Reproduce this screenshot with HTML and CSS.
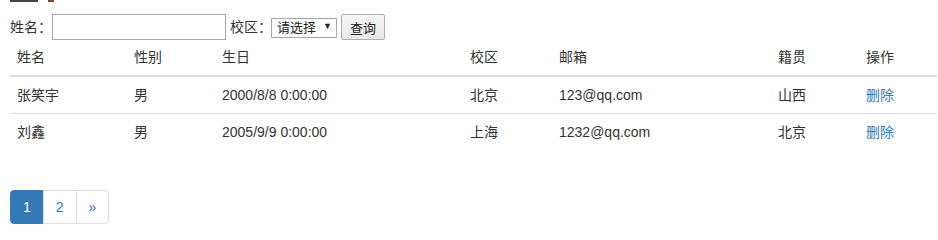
FILE: index.html
```html
<!DOCTYPE html>
<html lang="zh-CN">
<head>
<meta charset="utf-8">
<title>学生列表</title>
<link rel="stylesheet" href="styles.css">
</head>
<body>
<div class="page">
  <div class="top-cut"><span class="cut-a"></span><span class="cut-b"></span></div>
  <form class="search">
    <label class="lbl" for="name">姓名：</label>
    <input id="name" class="name-input" type="text">
    <label class="lbl gap" for="campus">校区：</label>
    <span class="select-wrap"><select id="campus" class="campus"><option>请选择</option></select></span>
    <button type="button" class="btn-query">查询</button>
  </form>
  <table class="table">
    <colgroup>
      <col class="c1"><col class="c2"><col class="c3"><col class="c4"><col class="c5"><col class="c6"><col class="c7">
    </colgroup>
    <thead>
      <tr><th>姓名</th><th>性别</th><th>生日</th><th>校区</th><th>邮箱</th><th>籍贯</th><th>操作</th></tr>
    </thead>
    <tbody>
      <tr><td>张笑宇</td><td>男</td><td>2000/8/8 0:00:00</td><td>北京</td><td>123@qq.com</td><td>山西</td><td><a href="#">删除</a></td></tr>
      <tr><td>刘鑫</td><td>男</td><td>2005/9/9 0:00:00</td><td>上海</td><td>1232@qq.com</td><td>北京</td><td><a href="#">删除</a></td></tr>
    </tbody>
  </table>
  <ul class="pagination">
    <li class="active"><a href="#">1</a></li>
    <li><a href="#">2</a></li>
    <li><a href="#">»</a></li>
  </ul>
</div>
</body>
</html>
```
FILE: styles.css
```css
* { box-sizing: border-box; }
html, body { margin: 0; padding: 0; background: #fff; }
body {
  font-family: "Liberation Sans", "Noto Sans CJK SC", sans-serif;
  font-size: 14px;
  line-height: 20px;
  color: #333;
}
.page { padding-left: 10px; width: 938px; }
.top-cut { height: 2px; display: flex; align-items: flex-start; }
.cut-a { width: 28px; height: 2px; background: #444; }
.cut-b { width: 6px; height: 2px; background: #8a3b2a; margin-left: 10px; }
.search {
  display: flex;
  align-items: center;
  height: 26px;
  margin-top: 12px;
  margin-bottom: 0;
}
.lbl { font-size: 14px; line-height: 20px; color: #333; }
.lbl.gap { margin-left: 4px; }
.name-input {
  width: 174px;
  height: 26px;
  border: 1px solid #a6a6a6;
  padding: 2px 4px;
  font: 13px "Liberation Sans", "Noto Sans CJK SC", sans-serif;
  margin: 0;
  background: #fff;
}
.select-wrap { position: relative; display: inline-block; margin-left: -1px; height: 20px; }
.select-wrap::after {
  content: "▼";
  position: absolute;
  right: 5px;
  top: 3px;
  font-size: 9px;
  line-height: 12px;
  color: #222;
  pointer-events: none;
}
.campus {
  -webkit-appearance: none;
  appearance: none;
  width: 66px;
  height: 20px;
  margin: 0;
  border: 1px solid #a6a6a6;
  border-radius: 0;
  background: #fff;
  padding: 0 14px 0 5px;
  font: 13px/18px "Liberation Sans", "Noto Sans CJK SC", sans-serif;
  color: #222;
}
.btn-query {
  margin-left: 4px;
  width: 44px;
  height: 26px;
  border: 1px solid #adadad;
  border-radius: 2px;
  background: linear-gradient(#f6f6f6, #e8e8e8);
  font: 13px "Liberation Sans", "Noto Sans CJK SC", sans-serif;
  color: #222;
  padding: 0;
}
.table {
  width: 927px;
  table-layout: fixed;
  border-collapse: collapse;
  border-spacing: 0;
  margin: 0;
}
.c1 { width: 117px; }
.c2 { width: 88px; }
.c3 { width: 248px; }
.c4 { width: 89px; }
.c5 { width: 219px; }
.c6 { width: 88px; }
.c7 { width: 78px; }
.table th {
  text-align: left;
  font-weight: normal;
  padding: 7px 8px 8px 7px;
  line-height: 20px;
  border-bottom: 2px solid #ddd;
  vertical-align: bottom;
}
.table td {
  padding: 8px 8px 8px 7px;
  line-height: 20px;
  border-top: 1px solid #ddd;
  vertical-align: top;
  white-space: nowrap;
}
.table tbody tr:first-child td { border-top: 0; }
.table a { color: #337ab7; text-decoration: none; }
.pagination {
  display: flex;
  list-style: none;
  margin: 40px 0 20px;
  padding: 0;
}
.pagination li a {
  display: block;
  padding: 6px 12px;
  line-height: 20px;
  font-size: 14px;
  color: #337ab7;
  text-decoration: none;
  background: #fff;
  border: 1px solid #ddd;
  margin-left: -1px;
}
.pagination li:first-child a { margin-left: 0; border-radius: 4px 0 0 4px; }
.pagination li:last-child a { border-radius: 0 4px 4px 0; }
.pagination li.active a { background: #337ab7; border-color: #337ab7; color: #fff; }
```
